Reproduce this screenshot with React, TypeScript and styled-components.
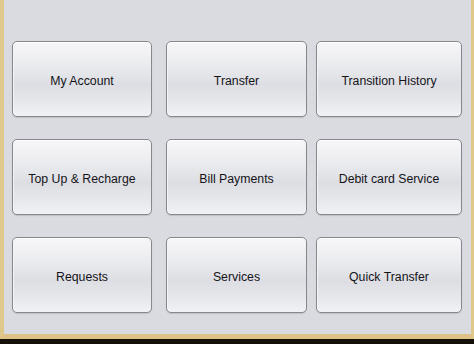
import React from 'react';
import styled, { createGlobalStyle } from 'styled-components';

const GlobalStyle = createGlobalStyle`
    html, body {
        margin: 0;
        padding: 0;
        width: 474px;
        height: 344px;
        overflow: hidden;
        background: linear-gradient(#3a2c18, #141008);
    }
`;

const Frame = styled.div`
    box-sizing: border-box;
    width: 474px;
    height: 339px;
    background: #d9dbe1;
    border-left: 4px solid #e0c78a;
    border-right: 3px solid #e0c78a;
    border-bottom: 5px solid #dcc286;
    padding: 41px 0 0 8px;
`;

const Grid = styled.div`
    display: grid;
    grid-template-columns: 154px 150px 146px;
    grid-auto-rows: 76px;
    row-gap: 22px;
`;

const Tile = styled.button<{ $width: number }>`
    box-sizing: border-box;
    width: ${p => p.$width}px;
    height: 76px;
    margin: 0;
    padding: 4px 0 0;
    border: 1px solid #86888d;
    border-radius: 5px;
    background: linear-gradient(
        to bottom,
        #f7f7f9 0%,
        #ebecef 30%,
        #dddee3 58%,
        #e6e7eb 80%,
        #f1f2f5 100%
    );
    box-shadow: inset 0 1px 0 #ffffff, inset 1px 0 0 #f4f5f7, 0 1px 1px rgba(0, 0, 0, 0.12);
    font-family: "Liberation Sans", Arial, sans-serif;
    font-size: 12.3px;
    color: #141418;
    text-align: center;
    cursor: pointer;
`;

const items = [
    'My Account',
    'Transfer',
    'Transition History',
    'Top Up & Recharge',
    'Bill Payments',
    'Debit card Service',
    'Requests',
    'Services',
    'Quick Transfer',
];

const widths = [140, 141, 146];

export default function App() {
    return (
        <>
            <GlobalStyle />
            <Frame>
                <Grid>
                    {items.map((label, i) => (
                        <Tile key={label} $width={widths[i % 3]}>
                            {label}
                        </Tile>
                    ))}
                </Grid>
            </Frame>
        </>
    );
}
